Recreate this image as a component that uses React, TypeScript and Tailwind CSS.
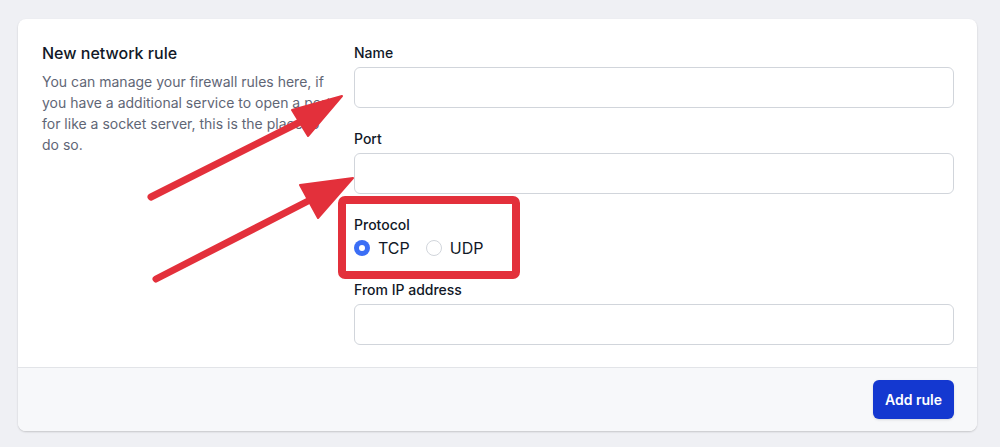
import { useState } from "react"

const fields = [
  { id: "name", label: "Name" },
  { id: "port", label: "Port" },
]

function Annotations() {
  // red markup drawn over the screenshot
  return (
    <svg className="pointer-events-none absolute left-0 top-0" width="1000" height="447" viewBox="0 0 1000 447">
      <g fill="#e3303b" stroke="#e3303b">
        <line x1="151" y1="197" x2="304" y2="120" strokeWidth="7" strokeLinecap="round" />
        <polygon points="342,96 292,110 308,136" strokeWidth="2" strokeLinejoin="round" />
        <line x1="156" y1="279" x2="312" y2="199" strokeWidth="7" strokeLinecap="round" />
        <polygon points="353,178 300,185 318,218" strokeWidth="2" strokeLinejoin="round" />
      </g>
      <rect x="342" y="200" width="174" height="75" rx="3" fill="none" stroke="#e3303b" strokeWidth="8" />
    </svg>
  )
}

export default function App() {
  const [protocol, setProtocol] = useState("tcp")

  return (
    <div className="relative h-[447px] w-[1000px] overflow-hidden bg-[#eff0f4] pl-[18px] pt-[19px] font-['Inter',sans-serif]">
      <div className="w-[959px] overflow-hidden rounded-lg bg-white shadow-[0_1px_2px_rgba(0,0,0,0.18)]">
        <div className="grid grid-cols-3 gap-6 pb-[22px] pl-6 pr-[23px] pt-6">
          <div>
            <h3 className="-mt-[2px] text-base font-medium leading-6 text-[#111827]">New network rule</h3>
            <p className="mt-[6px] w-[297px] text-sm leading-[21px] text-[#5f6676]">
              You can manage your firewall rules here, if you have a additional service to open a port for like a socket server, this is the place to do so.
            </p>
          </div>
          <div className="col-span-2 flex flex-col gap-[21px]">
            {fields.map((f) => (
              <div key={f.id}>
                <label htmlFor={f.id} className="block text-sm font-medium leading-5 text-[#111827]">
                  {f.label}
                </label>
                <input
                  id={f.id}
                  type="text"
                  className="mt-1 block h-[41px] w-full rounded-md border border-[#d1d5db] px-3 text-sm outline-none"
                />
              </div>
            ))}
            <div>
              <div className="text-sm font-medium leading-5 text-[#111827]">Protocol</div>
              <div className="mt-[2px] flex h-[22px] items-center gap-4">
                {["tcp", "udp"].map((p) => (
                  <label key={p} className="flex cursor-pointer items-center gap-2">
                    <span
                      onClick={() => setProtocol(p)}
                      className={
                        protocol === p
                          ? "flex h-4 w-4 items-center justify-center rounded-full bg-[#3b6ef5]"
                          : "flex h-4 w-4 items-center justify-center rounded-full border border-[#d1d5db] bg-white"
                      }
                    >
                      {protocol === p && <span className="h-1.5 w-1.5 rounded-full bg-white" />}
                    </span>
                    <span className="text-base leading-5 text-[#111827]">{p.toUpperCase()}</span>
                  </label>
                ))}
              </div>
            </div>
            <div>
              <label htmlFor="ip" className="block text-sm font-medium leading-5 text-[#111827]">
                From IP address
              </label>
              <input
                id="ip"
                type="text"
                className="mt-1 block h-[41px] w-full rounded-md border border-[#d1d5db] px-3 text-sm outline-none"
              />
            </div>
          </div>
        </div>
        <div className="flex justify-end border-t border-[#e2e4e8] bg-[#f7f8fa] py-[12px] pl-6 pr-[23px]">
          <button className="h-[39px] rounded-md bg-[#1438d0] px-[12px] text-sm font-semibold text-white shadow-sm">
            Add rule
          </button>
        </div>
      </div>
      <Annotations />
    </div>
  )
}
